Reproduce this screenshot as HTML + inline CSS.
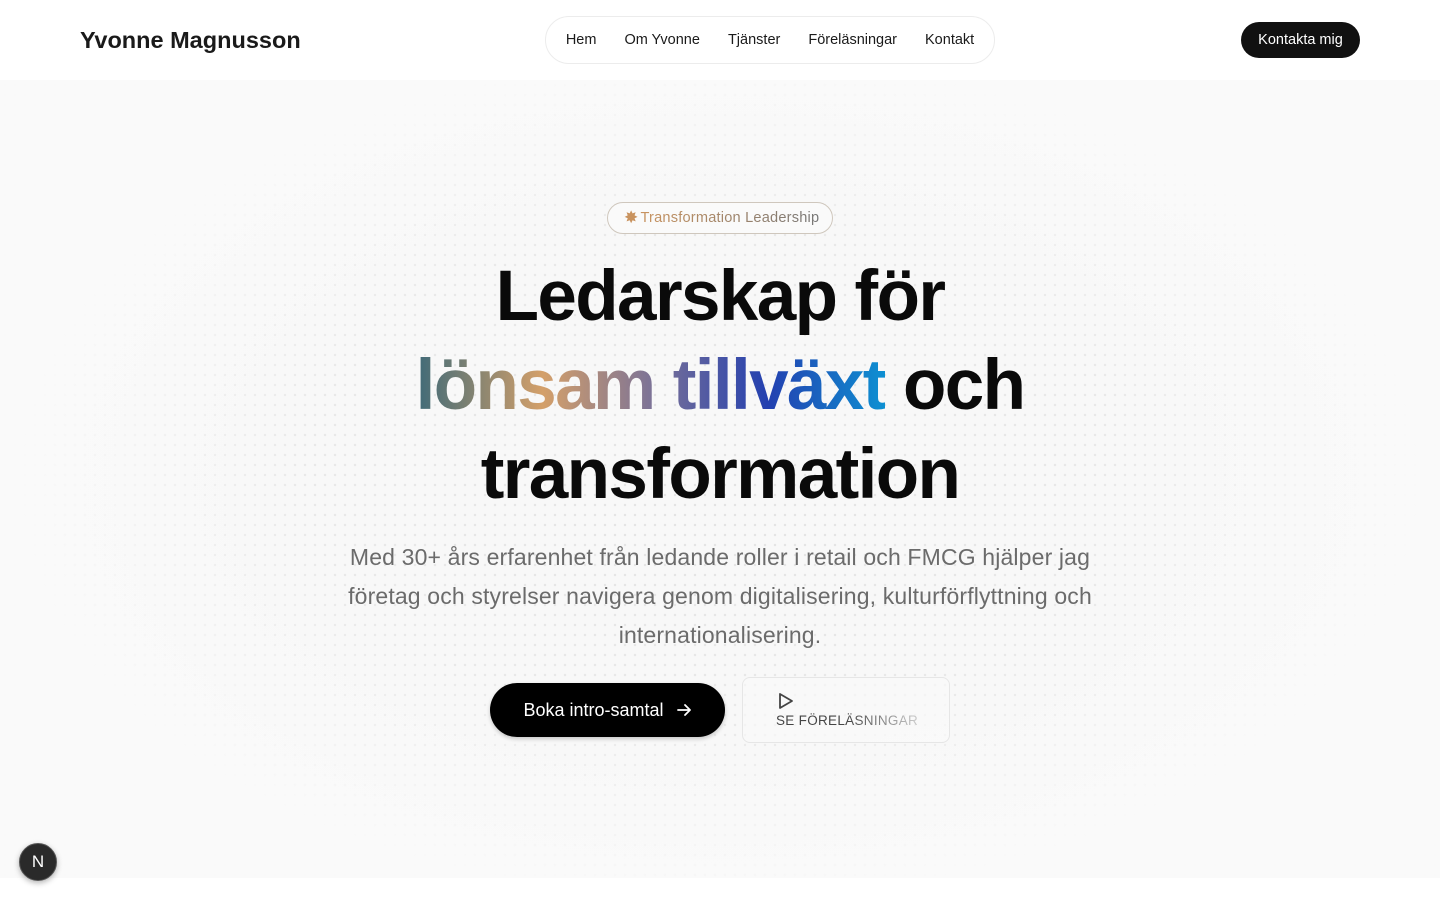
<!DOCTYPE html>
<html><head><meta charset="utf-8"><style>
*{margin:0;padding:0;box-sizing:border-box}
body{width:1440px;height:900px;overflow:hidden;background:#fff;font-family:"Liberation Sans",sans-serif;color:#111;position:relative}
header{height:80px;background:#fff;position:relative}
.logo{position:absolute;left:80px;top:27px;font-size:23.5px;font-weight:bold;letter-spacing:0;color:#1a1a1a}
nav{position:absolute;left:545px;top:16px;width:450px;height:48px;border:1px solid #ececec;border-radius:24px;display:flex;align-items:center;justify-content:center;gap:28px;font-size:14.5px;color:#1a1a1a}
.cta{position:absolute;left:1241px;top:22px;width:119px;height:36px;background:#111;color:#fff;border-radius:18px;font-size:14.5px;display:flex;align-items:center;justify-content:center}
.hero{position:absolute;left:0;top:80px;width:1440px;height:798px;background:#f8f8f8;
background-image:radial-gradient(circle,#e2e2e2 1.1px,transparent 1.4px);background-size:10px 10px;background-color:#f8f8f8}
.hero:before{content:"";position:absolute;inset:0;background:radial-gradient(ellipse 700px 420px at 50% 50%,rgba(248,248,248,0) 0%,rgba(248,248,248,.3) 60%,rgba(250,250,250,.95) 100%)}
.badge{position:absolute;left:607px;top:202px;width:226px;height:32px;border:1px solid #cfc7bd;border-radius:16px;background:#fafafa;font-size:14.6px;letter-spacing:.2px;display:flex;align-items:center;padding-left:16px;gap:2px}
.badge .s{color:#c9935f;font-size:17px}
.badge .t{background:linear-gradient(90deg,#c9935f,#777);-webkit-background-clip:text;color:transparent}
h1{position:absolute;left:0;width:1440px;top:252px;text-align:center;font-size:71px;line-height:89px;font-weight:bold;letter-spacing:-1.6px;color:#0a0a0a}
.g{background:linear-gradient(90deg,#3f6a78 0%,#d4a06a 27%,#7d7396 50%,#2340b0 75%,#0e90d2 100%);-webkit-background-clip:text;color:transparent}
p.sub{position:absolute;left:340px;width:760px;top:538px;text-align:center;font-size:23px;line-height:39px;color:#6b6b6b;letter-spacing:.15px}
.b1{position:absolute;left:490px;top:683px;width:235px;height:54px;border-radius:27px;background:#000;color:#fff;font-size:18px;display:flex;align-items:center;justify-content:center;gap:12px;box-shadow:0 2px 4px rgba(0,0,0,.2)}
.b2{position:absolute;left:742px;top:677px;width:208px;height:66px;border:1px solid #e6e6e6;border-radius:8px;background:rgba(250,250,250,.6)}
.b2 .l{position:absolute;left:33px;top:35px;font-size:13.5px;letter-spacing:.3px;background:linear-gradient(90deg,#444 50%,#ccc 100%);-webkit-background-clip:text;color:transparent}
.n{position:absolute;left:19px;top:843px;width:38px;height:38px;border-radius:50%;background:#2a2a2a;border:1.5px solid #555;color:#fff;font-size:17px;display:flex;align-items:center;justify-content:center;box-shadow:0 2px 6px rgba(0,0,0,.3)}
</style></head><body>
<header><div class="logo">Yvonne Magnusson</div>
<nav><span>Hem</span><span>Om Yvonne</span><span>Tjänster</span><span>Föreläsningar</span><span>Kontakt</span></nav>
<div class="cta">Kontakta mig</div></header>
<div class="hero"></div>
<div class="badge"><span class="s">✸</span><span class="t">Transformation Leadership</span></div>
<h1>Ledarskap för<br><span class="g">lönsam tillväxt</span> och<br>transformation</h1>
<p class="sub">Med 30+ års erfarenhet från ledande roller i retail och FMCG hjälper jag företag och styrelser navigera genom digitalisering, kulturförflyttning och internationalisering.</p>
<div class="b1">Boka intro-samtal <svg width="16" height="16" viewBox="0 0 16 16" fill="none" stroke="#fff" stroke-width="1.8" stroke-linecap="round" stroke-linejoin="round"><path d="M2 8h12M9 3l5 5-5 5"/></svg></div>
<div class="b2"><svg style="position:absolute;left:34px;top:14px" width="18" height="18" viewBox="0 0 18 18" fill="none" stroke="#444" stroke-width="1.8" stroke-linejoin="round"><path d="M3 2v14l12-7z"/></svg><span class="l">SE FÖRELÄSNINGAR</span></div>
<div class="n">N</div>
</body></html>
